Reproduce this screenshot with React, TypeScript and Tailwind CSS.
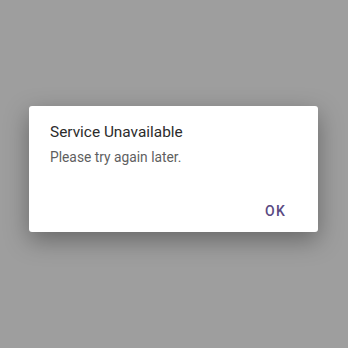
export default function App() {
  return (
    <div className="w-[348px] h-[348px] bg-[#9e9e9e] flex items-center justify-center font-['Roboto',sans-serif]">
      <div className="w-[289px] h-[126px] -mt-[10px] -ml-[1px] bg-white rounded-[3px] shadow-[0_8px_24px_rgba(0,0,0,0.35)] flex flex-col pl-[21px] pr-[20px] pt-[15px] pb-[4px]">
        <h2 className="text-[15.4px] leading-[22px] text-[#2b2b2b]">Service Unavailable</h2>
        <p className="mt-[4px] text-[13.8px] leading-[20px] text-[#5f5f5f]">Please try again later.</p>
        <div className="mt-auto flex justify-end">
          <button className="px-[12px] py-[6px] text-[14px] font-medium tracking-[1.2px] text-[#5a4a82]">OK</button>
        </div>
      </div>
    </div>
  );
}
